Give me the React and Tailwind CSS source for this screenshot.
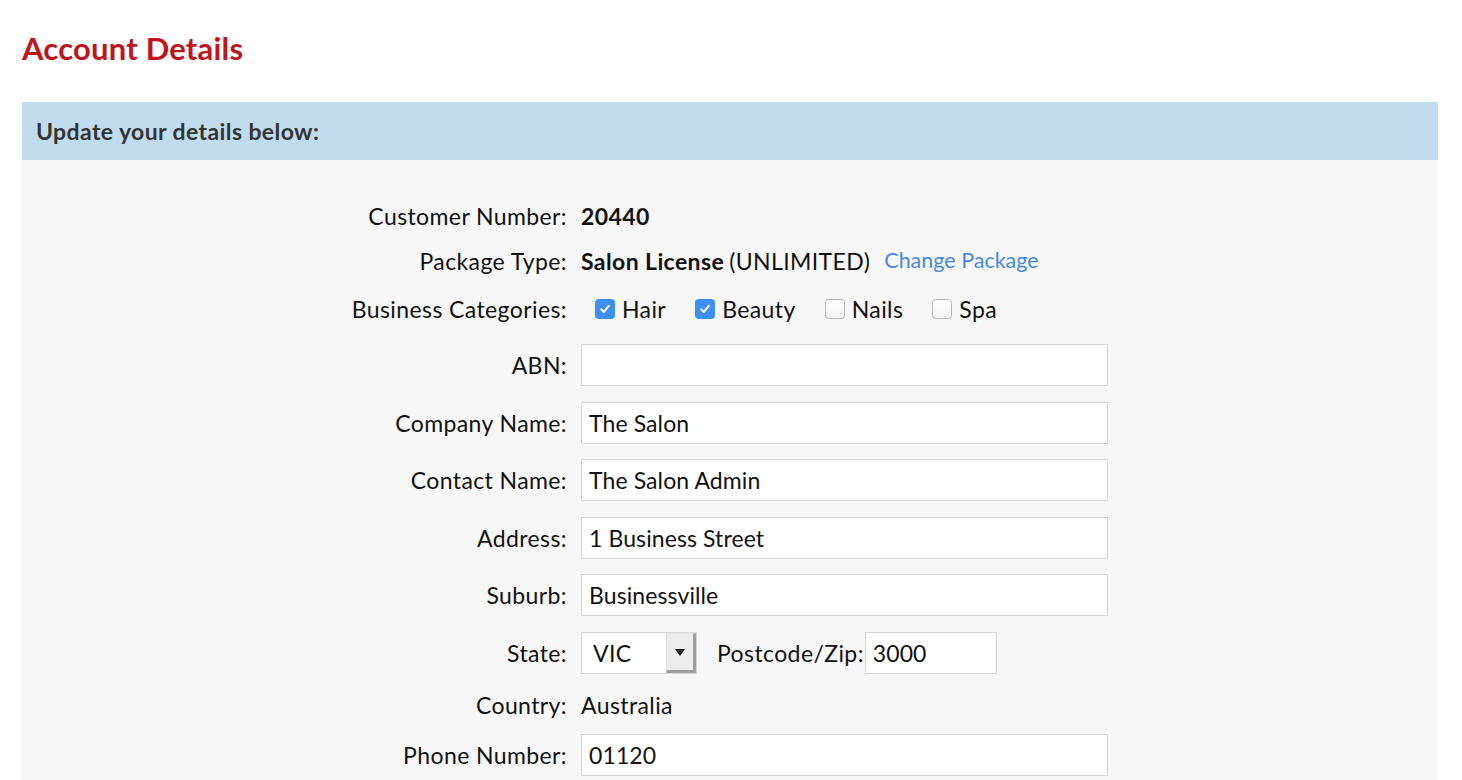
const CATEGORIES = [
  { name: 'Hair', checked: true },
  { name: 'Beauty', checked: true },
  { name: 'Nails', checked: false },
  { name: 'Spa', checked: false },
]

function Checkbox({ checked }) {
  if (checked) {
    return (
      <span className="flex h-[20px] w-[20px] items-center justify-center rounded-[4px] bg-[#3d8ef5]">
        <svg width="12" height="12" viewBox="0 0 12 12" fill="none">
          <path d="M2.2 6.4 L4.8 9 L9.8 2.8" stroke="white" strokeWidth="2" strokeLinecap="round" strokeLinejoin="round" />
        </svg>
      </span>
    )
  }
  return <span className="h-[20px] w-[20px] rounded-[4px] border border-[#b8b8b8] bg-gradient-to-b from-white to-[#f3f3f3]" />
}

function Row({ label, className = '', children }) {
  return (
    <div className={`grid grid-cols-[545px_1fr] items-center gap-x-[14px] ${className}`}>
      <div className="text-right">{label}</div>
      <div className="flex items-center">{children}</div>
    </div>
  )
}

function TextInput({ value, width = 'w-[527px]' }) {
  return (
    <div className={`flex h-[42px] ${width} items-center border border-[#d6d6d6] bg-white pl-[7px] tracking-[0.1px]`}>
      {value}
    </div>
  )
}

export default function App() {
  return (
    <div className="h-screen overflow-hidden bg-white pl-[22px] pr-[24px] pt-[30px] font-['Lato',sans-serif] text-[#111]">
      <h1 className="h-[36px] text-[31px] leading-[36px] font-bold tracking-[0.2px] text-[#c0141f]">Account Details</h1>

      <div className="mt-[36px]">
        <div className="flex h-[58px] items-center bg-[#c1dcef] px-[14px] text-[23px] font-bold tracking-[0.4px] text-[#333]">
          Update your details below:
        </div>

        <div className="h-[700px] bg-[#f7f7f7] pt-[41px] text-[23px] leading-none tracking-[0.4px]">
          <Row label="Customer Number:" className="h-[30px]">
            <span className="font-bold">20440</span>
          </Row>
          <Row label="Package Type:" className="mt-[15px] h-[30px]">
            <span className="font-bold">Salon License</span>
            <span className="ml-[5px]">(UNLIMITED)</span>
            <a href="#" className="ml-[14px] text-[21.5px] tracking-normal text-[#4a86e8]">Change Package</a>
          </Row>
          <Row label="Business Categories:" className="mt-[18px] h-[30px]">
            <div className="ml-[14px] flex items-center gap-[29px]">
              {CATEGORIES.map((c) => (
                <label key={c.name} className="flex items-center gap-[7px]">
                  <Checkbox checked={c.checked} />
                  <span>{c.name}</span>
                </label>
              ))}
            </div>
          </Row>
          <Row label="ABN:" className="mt-[20px]">
            <TextInput value="" />
          </Row>
          <Row label="Company Name:" className="mt-[16px]">
            <TextInput value="The Salon" />
          </Row>
          <Row label="Contact Name:" className="mt-[15px]">
            <TextInput value="The Salon Admin" />
          </Row>
          <Row label="Address:" className="mt-[16px]">
            <TextInput value="1 Business Street" />
          </Row>
          <Row label="Suburb:" className="mt-[15px]">
            <TextInput value="Businessville" />
          </Row>
          <Row label="State:" className="mt-[16px]">
            <div className="flex h-[42px] w-[116px] items-stretch border border-[#d6d6d6] bg-white">
              <span className="flex flex-1 items-center pl-[11px]">VIC</span>
              <span className="flex w-[30px] items-center justify-center border-l border-t border-l-[#e0e0e0] border-t-[#e0e0e0] border-r-[3px] border-b-[3px] border-r-[#9d9d9d] border-b-[#9d9d9d] bg-[#ececec]">
                <svg width="10" height="7" viewBox="0 0 10 7">
                  <path d="M0 0 H10 L5 7 Z" fill="#111" />
                </svg>
              </span>
            </div>
            <span className="ml-[20px]">Postcode/Zip:</span>
            <TextInput value="3000" width="ml-[1px] w-[132px]" />
          </Row>
          <Row label="Country:" className="mt-[16px] h-[30px]">
            <span>Australia</span>
          </Row>
          <Row label="Phone Number:" className="mt-[14px]">
            <TextInput value="01120" />
          </Row>
        </div>
      </div>
    </div>
  )
}
